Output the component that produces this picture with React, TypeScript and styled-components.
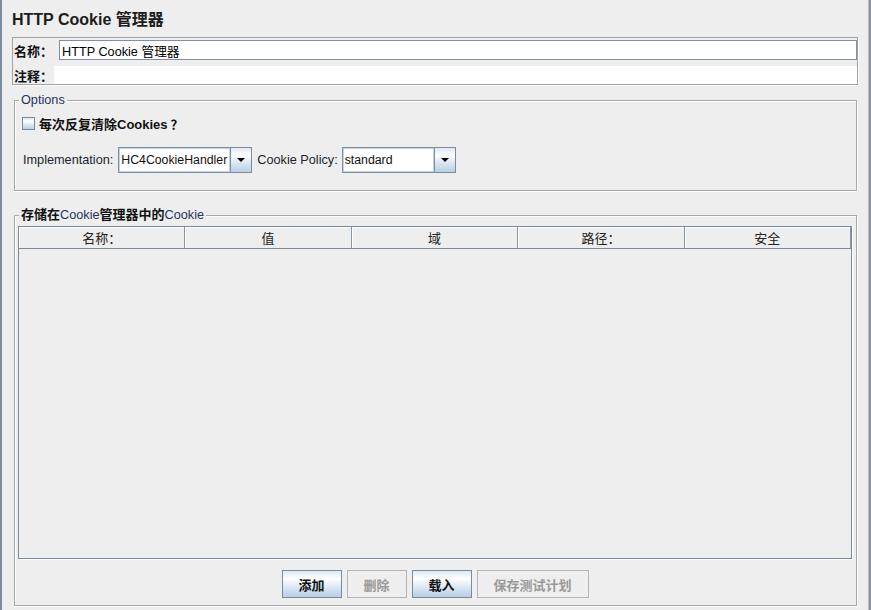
import React from "react";
import styled, { createGlobalStyle } from "styled-components";

const GlobalStyle = createGlobalStyle`
  html, body { margin: 0; padding: 0; background: #eeeeee; }
  body {
    font-family: "Liberation Sans", "Noto Sans CJK SC", Arial, sans-serif;
    font-size: 12.7px;
    color: #1f2533;
  }
  #root { width: 871px; height: 610px; overflow: hidden; }
  * { box-sizing: border-box; }
`;

const GRADIENT = "linear-gradient(#dde8f3 0%, #ffffff 30%, #dde8f3 60%, #b8cfe5 100%)";

const Frame = styled.div`
  display: flex;
  width: 871px;
  height: 610px;
  background: #eeeeee;
`;

const EdgeLeft = styled.div`
  width: 2px;
  flex: none;
  background: #7d8b9a;
`;

const EdgeRight = styled.div`
  width: 3px;
  flex: none;
  background: #8b949c;
  border-left: 1px solid #b8bec3;
`;

const Main = styled.div`
  flex: 1;
  min-width: 0;
  padding: 0 10px;
  display: flex;
  flex-direction: column;
`;

const Title = styled.h1`
  margin: 0 0 8px;
  padding-top: 10px;
  height: 29px;
  line-height: 19px;
  font-size: 16px;
  font-weight: bold;
  color: #1c1c1c;
  white-space: nowrap;
`;

const NamePanel = styled.div`
  border: 1px solid #a3a3a3;
  box-shadow: 1px 1px 0 #ffffff;
  padding: 2px 0 0 1px;
  display: flex;
  flex-direction: column;
  gap: 6px;
`;

const FieldRow = styled.div<{ $h: number }>`
  display: flex;
  align-items: center;
  height: ${(p) => p.$h}px;
`;

const FieldLabel = styled.label<{ $w: number }>`
  width: ${(p) => p.$w}px;
  flex: none;
  font-weight: bold;
  font-size: 13px;
  color: #111111;
  white-space: nowrap;
`;

const TextField = styled.div<{ $bordered?: boolean }>`
  flex: 1;
  align-self: stretch;
  background: #ffffff;
  border: ${(p) => (p.$bordered ? "1px solid #7f8fa0" : "none")};
  padding-left: 2px;
  display: flex;
  align-items: center;
  font-size: 12.7px;
  color: #000000;
  white-space: nowrap;
`;

const Group = styled.fieldset<{ $mt: number }>`
  margin: ${(p) => p.$mt}px 1px 0 2px;
  padding: 0;
  min-width: 0;
  border: 1px solid #a8a8a8;
  box-shadow: inset 1px 1px 0 #ffffff, 1px 1px 0 #ffffff;
`;

const GroupTitle = styled.legend`
  margin-left: 4px;
  padding: 0 2px;
  line-height: 15px;
  font-size: 12.7px;
  color: #1c3463;
  background: #eeeeee;
  white-space: nowrap;
`;

const Han = styled.span<{ $ml?: number }>`
  font-weight: bold;
  font-size: 13px;
  color: #111111;
  margin-left: ${(p) => p.$ml ?? 0}px;
`;

const OptionsBody = styled.div`
  padding: 5px 0 17px 7px;
  display: flex;
  flex-direction: column;
  gap: 14px;
`;

const CheckRow = styled.label`
  display: flex;
  align-items: center;
  height: 20px;
  gap: 4px;
  font-weight: bold;
  font-size: 13px;
  color: #111111;
  white-space: nowrap;
`;

const CheckBox = styled.span`
  width: 13px;
  height: 13px;
  flex: none;
  border: 1px solid #7a8a99;
  background: ${GRADIENT};
`;

const ComboRow = styled.div`
  display: flex;
  align-items: center;
  height: 26px;
  padding-left: 1px;
`;

const ComboLabel = styled.span<{ $mr: number }>`
  margin-right: ${(p) => p.$mr}px;
  white-space: nowrap;
  color: #1a1f2b;
`;

const Combo = styled.div<{ $w: number; $mr?: number }>`
  display: flex;
  flex: none;
  width: ${(p) => p.$w}px;
  height: 26px;
  margin-right: ${(p) => p.$mr ?? 0}px;
`;

const ComboEditor = styled.div`
  flex: 1;
  min-width: 0;
  background: #ffffff;
  border: 1px solid #7f8fa0;
  box-shadow: inset 0 0 0 1px #c3d3e4;
  padding-left: 2px;
  display: flex;
  align-items: center;
  font-size: 12.3px;
  color: #111111;
  white-space: nowrap;
  overflow: hidden;
`;

const ComboArrow = styled.div`
  width: 21px;
  flex: none;
  border: 1px solid #7a8a99;
  border-left: none;
  background: ${GRADIENT};
  display: flex;
  align-items: center;
  justify-content: center;
`;

const ArrowGlyph = styled.span`
  width: 0;
  height: 0;
  border-left: 4.5px solid transparent;
  border-right: 4.5px solid transparent;
  border-top: 4px solid #000000;
`;

const CookieBody = styled.div`
  padding: 3px 4px 7px 3px;
  display: flex;
  flex-direction: column;
`;

const TableBox = styled.div`
  height: 333px;
  border: 1px solid #7a8a99;
  box-shadow: 1px 1px 0 #ffffff;
  display: flex;
  flex-direction: column;
  background: #eeeeee;
`;

const HeaderRow = styled.div`
  display: flex;
  height: 22px;
  flex: none;
`;

const HeaderCell = styled.div`
  flex: 1;
  min-width: 0;
  display: flex;
  align-items: center;
  justify-content: center;
  border-right: 1px solid #8596a7;
  border-bottom: 1px solid #7a8a99;
  box-shadow: inset 1px 1px 0 #ffffff;
  font-size: 13px;
  color: #222222;
`;

const ButtonBar = styled.div`
  display: flex;
  justify-content: center;
  gap: 5px;
  margin-top: 11px;
`;

const Button = styled.button<{ $w: number }>`
  width: ${(p) => p.$w}px;
  height: 28px;
  padding: 0;
  font: inherit;
  font-weight: bold;
  font-size: 13px;
  color: #111111;
  border: 1px solid #7a8a99;
  background: ${GRADIENT};
  border-radius: 0;

  &:disabled {
    color: #999999;
    border-color: #b4b4b4;
    background: #eeeeee;
  }
`;

const columns = ["名称：", "值", "域", "路径：", "安全"];

export default function App() {
  return (
    <>
      <GlobalStyle />
      <Frame>
        <EdgeLeft />
        <Main>
          <Title>HTTP Cookie 管理器</Title>

          <NamePanel>
            <FieldRow $h={20}>
              <FieldLabel $w={45}>名称：</FieldLabel>
              <TextField $bordered>HTTP Cookie 管理器</TextField>
            </FieldRow>
            <FieldRow $h={18}>
              <FieldLabel $w={40}>注释：</FieldLabel>
              <TextField />
            </FieldRow>
          </NamePanel>

          <Group $mt={8}>
            <GroupTitle>Options</GroupTitle>
            <OptionsBody>
              <CheckRow>
                <CheckBox />
                <span>
                  每次反复清除Cookies<Han $ml={3}>？</Han>
                </span>
              </CheckRow>
              <ComboRow>
                <ComboLabel $mr={5}>Implementation:</ComboLabel>
                <Combo $w={134} $mr={5}>
                  <ComboEditor>HC4CookieHandler</ComboEditor>
                  <ComboArrow>
                    <ArrowGlyph />
                  </ComboArrow>
                </Combo>
                <ComboLabel $mr={4}>Cookie Policy:</ComboLabel>
                <Combo $w={114}>
                  <ComboEditor>standard</ComboEditor>
                  <ComboArrow>
                    <ArrowGlyph />
                  </ComboArrow>
                </Combo>
              </ComboRow>
            </OptionsBody>
          </Group>

          <Group $mt={16}>
            <GroupTitle>
              <Han>存储在</Han>Cookie<Han>管理器中的</Han>Cookie
            </GroupTitle>
            <CookieBody>
              <TableBox>
                <HeaderRow>
                  {columns.map((c) => (
                    <HeaderCell key={c}>{c}</HeaderCell>
                  ))}
                </HeaderRow>
              </TableBox>
              <ButtonBar>
                <Button $w={60}>添加</Button>
                <Button $w={60} disabled>
                  删除
                </Button>
                <Button $w={60}>载入</Button>
                <Button $w={112} disabled>
                  保存测试计划
                </Button>
              </ButtonBar>
            </CookieBody>
          </Group>
        </Main>
        <EdgeRight />
      </Frame>
    </>
  );
}
